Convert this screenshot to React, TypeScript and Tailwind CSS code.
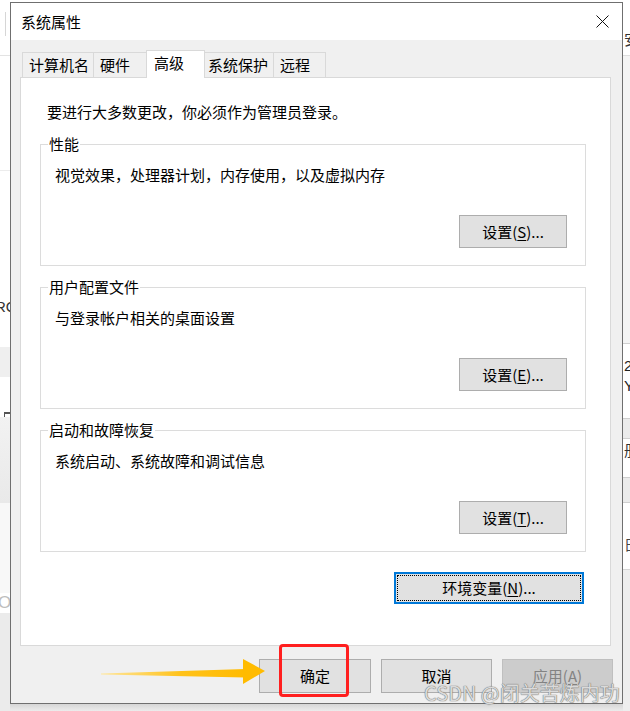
import React from 'react';

type Group = { title: string; desc: string; key: string };

const groups: Group[] = [
  { title: '性能', desc: '视觉效果，处理器计划，内存使用，以及虚拟内存', key: 'S' },
  { title: '用户配置文件', desc: '与登录帐户相关的桌面设置', key: 'E' },
  { title: '启动和故障恢复', desc: '系统启动、系统故障和调试信息', key: 'T' },
];

const tabs = [
  { label: '计算机名', cls: 'w-[72px] pl-[6px] h-[25px] mb-px bg-[#f0f0f0]' },
  { label: '硬件', cls: 'w-[54px] pl-[6px] h-[25px] mb-px bg-[#f0f0f0]' },
  { label: '高级', cls: 'w-[59px] pl-[7px] h-[28px] bg-white relative z-10' },
  { label: '系统保护', cls: 'w-[70px] pl-[3px] h-[25px] mb-px bg-[#f0f0f0]' },
  { label: '远程', cls: 'w-[53px] pl-[6px] h-[25px] mb-px bg-[#f0f0f0]' },
];

function Mnemonic({ before, k, after }: { before: string; k: string; after: string }) {
  return (
    <span>
      {before}(<span className="underline underline-offset-[2px]">{k}</span>){after}
    </span>
  );
}

function SettingsGroup({ g }: { g: Group }) {
  return (
    <fieldset className="border border-[#dcdcdc] pb-[17px]">
      <legend className="ml-[7px] px-px text-[15px] leading-[20px]">{g.title}</legend>
      <p className="mt-[11px] pl-[14px] text-[15px] leading-[20px]">{g.desc}</p>
      <div className="mt-[30px] flex justify-end pr-[18px]">
        <div className="flex h-[33px] w-[108px] items-center justify-center border border-[#adadad] bg-[#e1e1e1] text-[15px] leading-[20px]">
          <Mnemonic before="设置" k={g.key} after="..." />
        </div>
      </div>
    </fieldset>
  );
}

function LeftStrip() {
  return (
    <div className="flex h-[711px] w-[10px] shrink-0 flex-col overflow-hidden bg-white">
      <div className="h-[12px]" />
      <div className="ml-[5px] h-[24px] border-l border-[#d6d6d6]" />
      <div className="h-[19px]" />
      <div className="h-[115px] border-t border-[#e3e3e3]" />
      <div className="h-[127px] border-t border-[#ececec]" />
      <div className="-ml-[5px] h-[20px] text-[15px] leading-[20px] text-[#333] font-['Liberation_Sans',sans-serif]">RO</div>
      <div className="h-[30px]" />
      <div className="h-[30px] bg-[#efefef]" />
      <div className="h-[35px]" />
      <div className="ml-[4px] h-[5px] w-[6px] border-t-2 border-l border-[#555]" />
      <div className="h-[86px] bg-linear-to-b from-[#f2f2f2] to-[#e9e9e9]" />
      <div className="h-[90px] bg-[#f8f8f8]" />
      <div className="-ml-[2px] h-[20px] text-[17px] leading-[20px] text-[#bdbdbd] font-['Liberation_Sans',sans-serif]">O</div>
      <div className="flex-1 bg-[#ebebeb]" />
    </div>
  );
}

function RightStrip() {
  return (
    <div className="flex h-[711px] w-[7px] shrink-0 flex-col overflow-hidden bg-white">
      <div className="h-[31px]" />
      <div className="ml-px h-[15px] text-[15px] leading-[15px] text-[#333] font-['Noto_Sans_CJK_SC',sans-serif]">安</div>
      <div className="h-[9px]" />
      <div className="h-[288px] border-t border-[#dedede] bg-[#f4f4f4]" />
      <div className="h-[75px] border-t border-[#d0d0d0] pt-[12px] text-[15px] leading-[20px] text-[#222] font-['Liberation_Sans',sans-serif]">
        <div className="ml-px">2</div>
        <div className="ml-px">Y</div>
      </div>
      <div className="h-[21px] border-y border-[#cfcfcf] bg-[#ebebeb]" />
      <div className="h-[38px] pt-[3px] text-[15px] leading-[16px] text-[#333] font-['Noto_Sans_CJK_SC',sans-serif]">
        <div className="ml-px">册</div>
      </div>
      <div className="h-[26px] border-y border-[#cfcfcf] bg-[#ebebeb]" />
      <div className="h-[66px] pt-[33px] text-[14px] leading-[16px] text-[#444] font-['Noto_Sans_CJK_SC',sans-serif]">
        <div className="ml-px">日</div>
      </div>
      <div className="flex-1 border-t border-[#d6d6d6] bg-[#eeeeee]" />
    </div>
  );
}

export default function App() {
  return (
    <div className="relative flex h-[711px] w-[630px] overflow-hidden bg-white font-['Noto_Sans_CJK_SC','Liberation_Sans',sans-serif] text-black">
      <LeftStrip />

      <div className="flex w-[613px] shrink-0 flex-col">
        <div className="h-[2px] bg-white" />

        {/* 对话框 */}
        <div className="flex h-[702px] flex-col border border-[#6f6f6f] bg-white">
          <div className="flex h-[37px] items-center justify-between pl-[10px] pr-[13px]">
            <span className="text-[15px] leading-[20px]">系统属性</span>
            <svg width="13" height="13" viewBox="0 0 13 13" className="mt-[-1px]">
              <path d="M0.5 0.5 L12.5 12.5 M12.5 0.5 L0.5 12.5" stroke="#111" strokeWidth="1" fill="none" />
            </svg>
          </div>

          <div className="flex flex-1 flex-col bg-[#f0f0f0] pt-[10px]">
            <div className="ml-[9px] flex flex-col">
              <div className="relative z-10 flex h-[28px] items-end pl-[2px]">
                {tabs.map((t, i) => (
                  <div
                    key={t.label}
                    className={`${t.cls} ${i > 0 ? '-ml-px' : ''} flex items-start border border-b-0 border-[#d9d9d9] pt-[2px] text-[15px] leading-[20px]`}
                  >
                    {t.label}
                  </div>
                ))}
              </div>

              <div className="-mt-px flex h-[569px] w-[591px] flex-col border border-[#d9d9d9] bg-white">
                <p className="mt-[24px] pl-[26px] text-[15px] leading-[20px]">要进行大多数更改，你必须作为管理员登录。</p>

                <div className="ml-[19px] mt-[12px] flex w-[546px] flex-col gap-[11px]">
                  {groups.map((g) => (
                    <SettingsGroup key={g.title} g={g} />
                  ))}
                </div>

                <div className="ml-[19px] mt-[20px] flex w-[546px] justify-end pr-[2px]">
                  <div className="flex h-[32px] w-[190px] items-center justify-center border-2 border-[#0078d7] bg-[#e1e1e1] text-[15px] leading-[20px] outline-1 outline-dotted outline-black outline-offset-[-4px]">
                    <Mnemonic before="环境变量" k="N" after="..." />
                  </div>
                </div>
              </div>
            </div>

            <div className="mt-[13px] flex justify-end gap-[10px] pr-[9px]">
              <div className="flex h-[34px] w-[112px] items-center justify-center border border-[#adadad] bg-[#e1e1e1] text-[15px] leading-[20px]">
                确定
              </div>
              <div className="flex h-[34px] w-[111px] items-center justify-center border border-[#adadad] bg-[#e1e1e1] text-[15px] leading-[20px]">
                取消
              </div>
              <div className="flex h-[34px] w-[111px] items-center justify-center border border-[#bfbfbf] bg-[#cccccc] text-[15px] leading-[20px] text-[#838383]">
                <span>
                  应用(<span className="underline underline-offset-[2px]">A</span>)
                </span>
              </div>
            </div>
          </div>
        </div>

        <div className="flex-1 bg-linear-to-b from-[#d6d6d6] to-[#ececec]" />
      </div>

      <RightStrip />

      {/* 标注：箭头 */}
      <svg className="absolute left-[100px] top-[655px]" width="170" height="35" viewBox="0 0 170 35">
        <defs>
          <linearGradient id="tail" x1="0" y1="0" x2="1" y2="0">
            <stop offset="0" stopColor="#ffe7a0" />
            <stop offset="0.55" stopColor="#ffc21a" />
            <stop offset="1" stopColor="#ffbb00" />
          </linearGradient>
        </defs>
        <polygon points="1,18.6 1,19.6 146,22.5 146,14" fill="url(#tail)" />
        <polygon points="143,4 165,16 143,29" fill="#ffbb00" />
      </svg>

      {/* 标注：红框 */}
      <div className="absolute left-[279px] top-[644px] h-[53px] w-[70px] rounded-[4px] border-[3px] border-[#ff1f1f]" />

      {/* 水印 */}
      <div className="absolute left-[424px] top-[682px] text-[20px] leading-[22px] text-[#dadada] [text-shadow:0_0_1px_#6e6e6e,0_0_1px_#6e6e6e]">
        CSDN @闭关苦炼内功
      </div>
    </div>
  );
}
